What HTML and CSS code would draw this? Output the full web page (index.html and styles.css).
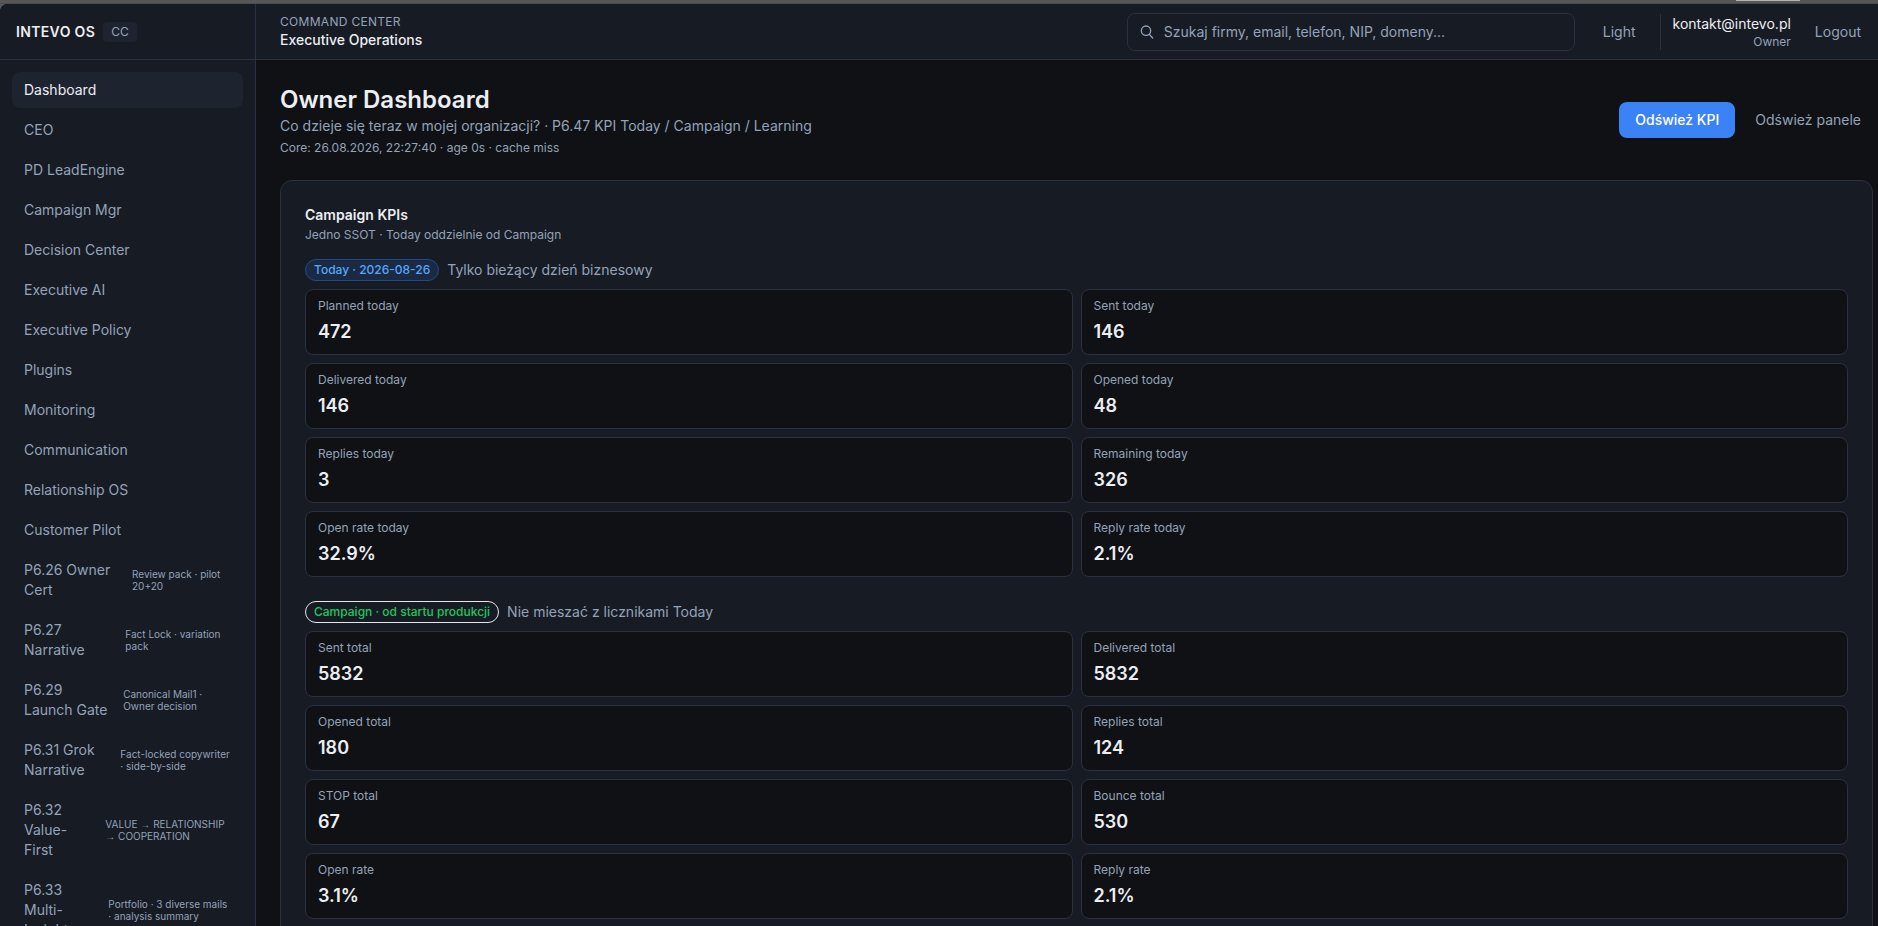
FILE: index.html
```html
<!DOCTYPE html>
<html lang="pl">
<head>
    <meta charset="UTF-8">
    <meta name="viewport" content="width=device-width, initial-scale=1.0">
    <title>INTEVO OS - Owner Dashboard</title>
    <link rel="stylesheet" href="styles.css">
</head>
<body>
    <div class="top-strip"><span class="strip-handle"></span></div>

    <div class="app">
        <aside class="sidebar">
            <div class="brand">
                <span class="brand-name">INTEVO OS</span>
                <span class="brand-tag">CC</span>
            </div>
            <nav class="nav">
                <a href="#" class="nav-link active">Dashboard</a>
                <a href="#" class="nav-link">CEO</a>
                <a href="#" class="nav-link">PD LeadEngine</a>
                <a href="#" class="nav-link">Campaign Mgr</a>
                <a href="#" class="nav-link">Decision Center</a>
                <a href="#" class="nav-link">Executive AI</a>
                <a href="#" class="nav-link">Executive Policy</a>
                <a href="#" class="nav-link">Plugins</a>
                <a href="#" class="nav-link">Monitoring</a>
                <a href="#" class="nav-link">Communication</a>
                <a href="#" class="nav-link">Relationship OS</a>
                <a href="#" class="nav-link">Customer Pilot</a>
                <a href="#" class="nav-link"><span>P6.26 Owner Cert</span><span class="nav-note">Review pack · pilot 20+20</span></a>
                <a href="#" class="nav-link"><span>P6.27 Narrative</span><span class="nav-note">Fact Lock · variation pack</span></a>
                <a href="#" class="nav-link"><span>P6.29 Launch Gate</span><span class="nav-note">Canonical Mail1 · Owner decision</span></a>
                <a href="#" class="nav-link"><span>P6.31 Grok Narrative</span><span class="nav-note">Fact-locked copywriter · side-by-side</span></a>
                <a href="#" class="nav-link"><span>P6.32 Value-First</span><span class="nav-note">VALUE <span class="arrow">→</span> RELATIONSHIP <span class="arrow">→</span> COOPERATION</span></a>
                <a href="#" class="nav-link"><span>P6.33 Multi-Insight</span><span class="nav-note">Portfolio · 3 diverse mails · analysis summary</span></a>
            </nav>
        </aside>

        <div class="content">
            <header class="topbar">
                <div class="topbar-title">
                    <p class="eyebrow">Command Center</p>
                    <p class="section-name">Executive Operations</p>
                </div>
                <label class="search">
                    <svg class="search-icon" viewBox="0 0 24 24" fill="none" stroke="currentColor" stroke-width="2" stroke-linecap="round" stroke-linejoin="round" aria-hidden="true">
                        <circle cx="9" cy="10" r="7"/>
                        <path d="M14 15.5l5 5.5"/>
                    </svg>
                    <input type="search" class="search-input" aria-label="Szukaj" placeholder="Szukaj firmy, email, telefon, NIP, domeny...">
                </label>
                <div class="topbar-actions">
                    <button type="button" class="btn btn-ghost">Light</button>
                    <div class="user">
                        <p class="user-email">kontakt@intevo.pl</p>
                        <p class="user-role">Owner</p>
                    </div>
                    <button type="button" class="btn btn-ghost">Logout</button>
                </div>
            </header>

            <main class="main">
                <div class="page-head">
                    <div>
                        <h1>Owner Dashboard</h1>
                        <p class="page-lead">Co dzieje się teraz w mojej organizacji? · P6.47 KPI Today / Campaign / Learning</p>
                        <p class="page-meta">Core: 26.08.2026, 22:27:40 · age 0s · cache miss</p>
                    </div>
                    <div class="page-actions">
                        <button type="button" class="btn btn-primary">Odśwież KPI</button>
                        <button type="button" class="btn btn-ghost">Odśwież panele</button>
                    </div>
                </div>

                <section class="panel">
                    <div class="panel-head">
                        <h2>Campaign KPIs</h2>
                        <p>Jedno SSOT · Today oddzielnie od Campaign</p>
                    </div>

                    <div class="kpi-group">
                        <div class="kpi-head">
                            <span class="pill pill-today">Today · 2026-08-26</span>
                            <span>Tylko bieżący dzień biznesowy</span>
                        </div>
                        <dl class="kpi-grid">
                            <div class="kpi"><dt>Planned today</dt><dd>472</dd></div>
                            <div class="kpi"><dt>Sent today</dt><dd>146</dd></div>
                            <div class="kpi"><dt>Delivered today</dt><dd>146</dd></div>
                            <div class="kpi"><dt>Opened today</dt><dd>48</dd></div>
                            <div class="kpi"><dt>Replies today</dt><dd>3</dd></div>
                            <div class="kpi"><dt>Remaining today</dt><dd>326</dd></div>
                            <div class="kpi"><dt>Open rate today</dt><dd>32.9%</dd></div>
                            <div class="kpi"><dt>Reply rate today</dt><dd>2.1%</dd></div>
                        </dl>
                    </div>

                    <div class="kpi-group">
                        <div class="kpi-head">
                            <span class="pill pill-campaign">Campaign · od startu produkcji</span>
                            <span>Nie mieszać z licznikami Today</span>
                        </div>
                        <dl class="kpi-grid">
                            <div class="kpi"><dt>Sent total</dt><dd>5832</dd></div>
                            <div class="kpi"><dt>Delivered total</dt><dd>5832</dd></div>
                            <div class="kpi"><dt>Opened total</dt><dd>180</dd></div>
                            <div class="kpi"><dt>Replies total</dt><dd>124</dd></div>
                            <div class="kpi"><dt>STOP total</dt><dd>67</dd></div>
                            <div class="kpi"><dt>Bounce total</dt><dd>530</dd></div>
                            <div class="kpi"><dt>Open rate</dt><dd>3.1%</dd></div>
                            <div class="kpi"><dt>Reply rate</dt><dd>2.1%</dd></div>
                        </dl>
                    </div>
                </section>
            </main>
        </div>
    </div>
</body>
</html>
```

FILE: styles.css
```css
:root {
    --bg: #0f1115;
    --surface: #171b24;
    --surface-active: #1e2330;
    --border: #2a3142;
    --text: #eceef2;
    --muted: #94a3b8;
    --accent: #3b82f6;
}

* {
    box-sizing: border-box;
}

body {
    margin: 0;
    height: 100vh;
    display: flex;
    flex-direction: column;
    overflow: hidden;
    font-family: Inter, 'Liberation Sans', sans-serif;
    font-size: 14px;
    line-height: 20px;
    background-color: #57575a;
    color: var(--text);
}

h1, h2, p, dl, dd {
    margin: 0;
}

.top-strip {
    flex: none;
    display: flex;
    justify-content: flex-end;
    height: 4px;
    padding-right: 78px;
    border-bottom: 1px solid #4a4a4d;
}

.strip-handle {
    width: 64px;
    height: 1px;
    background-color: #b4b4b4;
}

.app {
    flex: 1;
    display: flex;
    min-height: 0;
    overflow: hidden;
    border-top-left-radius: 8px;
    background-color: var(--bg);
}

/* Sidebar */
.sidebar {
    flex: none;
    width: 256px;
    background-color: var(--surface);
    border-right: 1px solid var(--border);
}

.brand {
    display: flex;
    align-items: center;
    gap: 8px;
    height: 56px;
    padding: 0 16px;
    border-bottom: 1px solid var(--border);
}

.brand-name {
    font-weight: 600;
    letter-spacing: 0.025em;
}

.brand-tag {
    padding: 2px 8px;
    border-radius: 4px;
    font-size: 12px;
    line-height: 16px;
    background-color: var(--surface-active);
    color: var(--muted);
}

.nav {
    display: flex;
    flex-direction: column;
    gap: 4px;
    padding: 12px;
}

.nav-link {
    display: flex;
    align-items: center;
    justify-content: space-between;
    gap: 12px;
    padding: 8px 12px;
    border-radius: 8px;
    color: var(--muted);
    text-decoration: none;
}

.nav-link:hover {
    color: var(--text);
}

.nav-link.active {
    background-color: var(--surface-active);
    color: var(--text);
}

.nav-note {
    font-size: 10px;
    line-height: 12px;
}

.arrow {
    font-family: 'Liberation Sans', sans-serif;
    line-height: 10px;
}

/* Top bar */
.content {
    flex: 1;
    min-width: 0;
}

.topbar {
    display: flex;
    align-items: center;
    gap: 16px;
    height: 56px;
    padding: 0 5px 0 24px;
    background-color: var(--surface);
    border-bottom: 1px solid var(--border);
}

.topbar-title {
    margin-right: auto;
}

.eyebrow {
    font-size: 12px;
    line-height: 16px;
    letter-spacing: 0.025em;
    text-transform: uppercase;
    color: var(--muted);
}

.section-name {
    font-weight: 500;
}

.search {
    display: flex;
    align-items: center;
    gap: 8px;
    width: 448px;
    padding: 8px 12px;
    border: 1px solid var(--border);
    border-radius: 8px;
    color: var(--muted);
}

.search-icon {
    width: 16px;
    height: 16px;
}

.search-input {
    flex: 1;
    height: 20px;
    padding: 0;
    border: none;
    outline: none;
    background: none;
    font: inherit;
    color: var(--text);
}

.search-input::placeholder {
    color: var(--muted);
    opacity: 1;
}

.topbar-actions {
    display: flex;
    align-items: center;
    gap: 12px;
}

.user {
    padding-left: 12px;
    border-left: 1px solid var(--border);
    text-align: right;
}

.user-role {
    font-size: 12px;
    line-height: 16px;
    color: var(--muted);
}

.btn {
    padding: 8px 12px;
    border: none;
    border-radius: 8px;
    font: inherit;
    cursor: pointer;
}

.btn-ghost {
    background: none;
    color: var(--muted);
}

.btn-ghost:hover {
    color: var(--text);
}

.btn-primary {
    padding: 8px 16px;
    font-weight: 500;
    background-color: var(--accent);
    color: #ffffff;
}

/* Page */
.main {
    padding: 24px 5px 24px 24px;
}

.page-head {
    display: flex;
    align-items: center;
    justify-content: space-between;
    margin-bottom: 24px;
}

.page-head h1 {
    font-size: 24px;
    line-height: 32px;
    font-weight: 600;
}

.page-lead {
    color: var(--muted);
}

.page-meta {
    margin-top: 4px;
    font-size: 12px;
    line-height: 16px;
    color: var(--muted);
}

.page-actions {
    display: flex;
    gap: 8px;
}

.panel {
    padding: 24px;
    border: 1px solid var(--border);
    border-radius: 12px;
    background-color: var(--surface);
}

.panel-head {
    margin-bottom: 16px;
}

.panel-head h2 {
    margin-bottom: 2px;
    font-size: 14px;
    font-weight: 600;
}

.panel-head p {
    font-size: 12px;
    line-height: 16px;
    color: var(--muted);
}

.kpi-group {
    margin-bottom: 24px;
}

.kpi-head {
    display: flex;
    align-items: center;
    gap: 8px;
    margin-bottom: 8px;
    color: var(--muted);
}

.pill {
    padding: 2px 8px;
    border: 1px solid;
    border-radius: 11px;
    font-size: 12px;
    line-height: 16px;
    font-weight: 500;
}

.pill-today {
    border-color: #1f4a85;
    background-color: #1b2a43;
    color: #58a6ff;
}

.pill-campaign {
    border-color: #e5e7eb;
    color: #22c55e;
}

.kpi-grid {
    display: grid;
    grid-template-columns: 1fr 1fr;
    gap: 8px;
}

.kpi {
    padding: 8px 12px;
    border: 1px solid var(--border);
    border-radius: 8px;
    background-color: var(--bg);
}

.kpi dt {
    margin-bottom: 4px;
    font-size: 12px;
    line-height: 16px;
    color: var(--muted);
}

.kpi dd {
    font-size: 18px;
    line-height: 28px;
    font-weight: 600;
}
```
